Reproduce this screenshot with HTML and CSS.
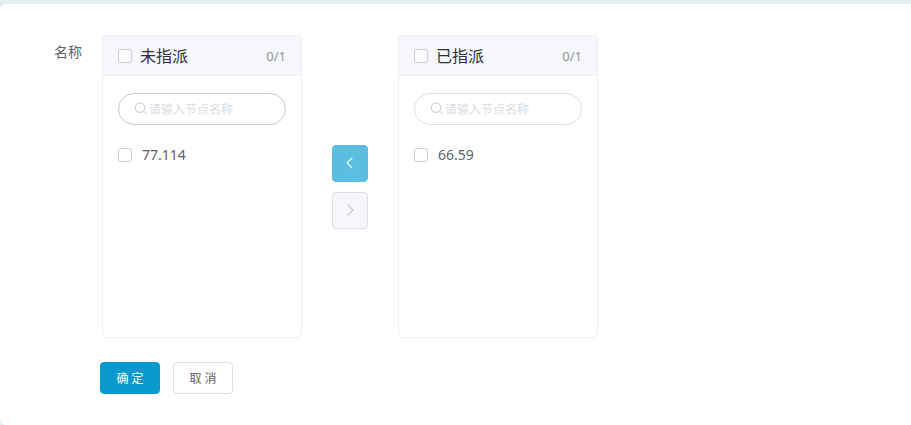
FILE: index.html
```html
<!DOCTYPE html>
<html lang="zh-CN">
<head>
<meta charset="utf-8">
<meta name="viewport" content="width=device-width, initial-scale=1">
<title>指派节点</title>
<link rel="stylesheet" href="styles.css">
</head>
<body>
<form class="card">
  <div class="form-item">
    <span class="form-label">名称</span>
    <div class="transfer">
      <section class="panel">
        <header class="panel-header">
          <label class="check check-all"><input type="checkbox"><span>未指派</span></label>
          <span class="count">0/1</span>
        </header>
        <label class="search search-hover">
          <svg class="search-icon" viewBox="0 0 14 14" aria-hidden="true"><circle cx="6" cy="5.6" r="4.8"/><path d="M9.5 9 12.8 12"/></svg>
          <input type="text" placeholder="请输入节点名称" aria-label="请输入节点名称">
        </label>
        <div class="list">
          <label class="check check-item"><input type="checkbox"><span>77.114</span></label>
        </div>
      </section>
      <div class="moves">
        <button type="button" class="move move-active" aria-label="左移"><svg viewBox="0 0 14 14" aria-hidden="true"><path d="M9.4 1.6 4 7 9.4 12.4"/></svg></button>
        <button type="button" class="move" disabled aria-label="右移"><svg viewBox="0 0 14 14" aria-hidden="true"><path d="M4.6 1.6 10 7 4.6 12.4"/></svg></button>
      </div>
      <section class="panel">
        <header class="panel-header">
          <label class="check check-all"><input type="checkbox"><span>已指派</span></label>
          <span class="count">0/1</span>
        </header>
        <label class="search">
          <svg class="search-icon" viewBox="0 0 14 14" aria-hidden="true"><circle cx="6" cy="5.6" r="4.8"/><path d="M9.5 9 12.8 12"/></svg>
          <input type="text" placeholder="请输入节点名称" aria-label="请输入节点名称">
        </label>
        <div class="list">
          <label class="check check-item"><input type="checkbox"><span>66.59</span></label>
        </div>
      </section>
    </div>
  </div>
  <div class="actions">
    <button type="submit" class="btn btn-primary">确 定</button>
    <button type="button" class="btn">取 消</button>
  </div>
</form>
</body>
</html>
```
FILE: styles.css
```css
* {
  box-sizing: border-box;
}

body {
  margin: 0;
  padding-top: 4px;
  min-height: 100vh;
  display: flex;
  flex-direction: column;
  background: #e4ecf0;
  color: #606266;
  font: 14px/20px "Noto Sans", "Noto Sans CJK SC", sans-serif;
}

button,
input {
  font-family: inherit;
}

.card {
  flex: 1;
  padding: 31px 20px;
  background: #fff;
  border-radius: 6px 0 0 6px;
}

.form-item {
  display: flex;
  align-items: flex-start;
}

.form-label {
  width: 82px;
  padding: 7px 20px 0 0;
  text-align: right;
}

.transfer {
  display: flex;
  align-items: center;
  gap: 30px;
}

.panel {
  width: 200px;
  min-height: 303px;
  border: 1px solid #ebeef5;
  border-radius: 4px;
  overflow: hidden;
}

.panel-header {
  display: flex;
  align-items: center;
  justify-content: space-between;
  height: 40px;
  padding: 0 15px;
  background: #f5f7fa;
  border-bottom: 1px solid #ebeef5;
}

.count {
  color: #909399;
  font-size: 13px;
}

.check {
  display: flex;
  align-items: center;
}

.check input {
  appearance: none;
  width: 14px;
  height: 14px;
  margin: 0;
  background: #fff;
  border: 1px solid #c9ccd2;
  border-radius: 3px;
}

.check-all {
  gap: 8px;
  color: #303133;
  font-size: 16px;
}

.check-item {
  gap: 10px;
  height: 30px;
}

.search {
  display: flex;
  align-items: center;
  gap: 1px;
  height: 32px;
  margin: 17px 15px 15px;
  padding: 0 15px;
  border: 1px solid #dcdfe6;
  border-radius: 16px;
}

.search-hover {
  border-color: #c5c8d0;
}

.search-icon {
  flex: none;
  width: 14px;
  height: 14px;
  fill: none;
  stroke: #c0c4cc;
}

.search input {
  flex: 1;
  min-width: 0;
  padding: 0;
  border: 0;
  outline: 0;
  background: none;
  color: #606266;
  font-size: 12px;
}

.search input::placeholder {
  color: #d9dce1;
}

.list {
  padding: 0 15px;
}

.moves {
  display: flex;
  flex-direction: column;
  gap: 10px;
}

.move {
  display: flex;
  align-items: center;
  justify-content: center;
  width: 36px;
  height: 37px;
  padding: 0;
  background: #f5f7fa;
  border: 1px solid #dcdfe6;
  border-radius: 4px;
  color: #c0c4cc;
}

.move-active {
  background: #5bbde0;
  border-color: #5bbde0;
  color: #fff;
}

.move svg {
  width: 14px;
  height: 14px;
  fill: none;
  stroke: currentColor;
  stroke-width: 1.2;
}

.actions {
  display: flex;
  gap: 13px;
  margin: 24px 0 0 80px;
}

.btn {
  width: 60px;
  height: 32px;
  padding: 0;
  background: #fff;
  border: 1px solid #dcdfe6;
  border-radius: 4px;
  color: #606266;
  font-size: 12px;
}

.btn-primary {
  background: #0899ce;
  border-color: #0899ce;
  color: #fff;
}
```
